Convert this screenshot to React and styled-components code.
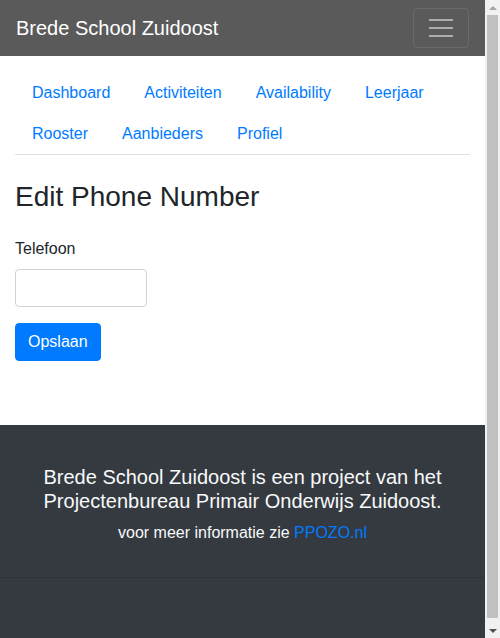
import styled, { createGlobalStyle } from 'styled-components';

const GlobalStyle = createGlobalStyle`
  html, body {
    margin: 0;
    padding: 0;
  }
  body {
    font-family: "Liberation Sans", Arial, sans-serif;
    font-size: 16px;
    line-height: 1.5;
    color: #212529;
    background-color: #fff;
  }
  * {
    box-sizing: border-box;
  }
`;

const Page = styled.div`
  width: 485px;
`;

const Navbar = styled.nav`
  display: flex;
  justify-content: space-between;
  align-items: center;
  padding: 8px 16px;
  background-color: #5a5a5a;
`;

const Brand = styled.a`
  padding: 5px 0;
  font-size: 20px;
  line-height: 30px;
  color: #fff;
  text-decoration: none;
`;

const Toggler = styled.button`
  display: flex;
  flex-direction: column;
  justify-content: center;
  align-items: center;
  gap: 6px;
  width: 56px;
  height: 40px;
  padding: 0;
  background: transparent;
  border: 1px solid rgba(255, 255, 255, 0.1);
  border-radius: 4px;
  cursor: pointer;
`;

const TogglerLine = styled.span`
  display: block;
  width: 24px;
  height: 2px;
  background-color: rgba(255, 255, 255, 0.5);
`;

const Main = styled.main`
  padding: 16px 15px 64px;
`;

const Tabs = styled.ul`
  display: flex;
  flex-wrap: wrap;
  list-style: none;
  margin: 0;
  padding: 0;
  border-bottom: 1px solid #dee2e6;
`;

const TabItem = styled.li`
  margin-bottom: -1px;
`;

const TabLink = styled.a`
  display: block;
  padding: 8px 16px;
  border: 1px solid transparent;
  color: #007bff;
  text-decoration: none;
  cursor: pointer;
  &:hover {
    text-decoration: underline;
  }
`;

const Title = styled.h3`
  margin: 25px 0 23px;
  font-size: 28px;
  font-weight: 500;
  line-height: 1.2;
`;

const FormGroup = styled.div`
  margin-bottom: 16px;
`;

const Label = styled.label`
  display: block;
  margin-bottom: 8px;
`;

const Input = styled.input`
  display: block;
  width: 132px;
  height: 38px;
  padding: 6px 12px;
  font-family: inherit;
  font-size: 16px;
  color: #495057;
  border: 1px solid #ced4da;
  border-radius: 4px;
`;

const Button = styled.button`
  padding: 6px 12px;
  font-family: inherit;
  font-size: 16px;
  line-height: 24px;
  color: #fff;
  background-color: #007bff;
  border: 1px solid #007bff;
  border-radius: 4px;
  cursor: pointer;
`;

const Footer = styled.footer`
  background-color: #343a40;
  color: #f8f9fa;
  text-align: center;
`;

const FooterTop = styled.div`
  padding: 40px 15px 32px;
`;

const FooterLead = styled.h5`
  margin: 0 0 8px;
  font-size: 20px;
  font-weight: 400;
  line-height: 1.2;
`;

const FooterText = styled.p`
  margin: 0;
`;

const FooterLink = styled.a`
  color: #007bff;
  text-decoration: none;
`;

const FooterBottom = styled.div`
  height: 66px;
  border-top: 1px solid rgba(0, 0, 0, 0.12);
`;

// window scrollbar as it shows in the screenshot
const Scrollbar = styled.div`
  position: fixed;
  top: 0;
  right: 0;
  width: 15px;
  height: 100vh;
  display: flex;
  flex-direction: column;
  background-color: #f1f1f1;
`;

const ScrollArrow = styled.div`
  height: 15px;
  display: flex;
  justify-content: center;
  align-items: center;
  &::after {
    content: '';
    width: 0;
    height: 0;
    border-left: 4px solid transparent;
    border-right: 4px solid transparent;
    ${({ down }) => (down
      ? 'border-top: 4px solid #505050;'
      : 'border-bottom: 4px solid #a3a3a3;')}
  }
`;

const ScrollThumb = styled.div`
  flex: 1;
  margin: 0 2px 5px;
  background-color: #c1c1c1;
`;

const tabs = ['Dashboard', 'Activiteiten', 'Availability', 'Leerjaar', 'Rooster', 'Aanbieders', 'Profiel'];

const App = () => {
  return (
    <>
      <GlobalStyle />
      <Page>
        <Navbar>
          <Brand href="#">Brede School Zuidoost</Brand>
          <Toggler aria-label="Toggle navigation">
            <TogglerLine />
            <TogglerLine />
            <TogglerLine />
          </Toggler>
        </Navbar>
        <Main>
          <Tabs>
            {tabs.map((tab) => (
              <TabItem key={tab}>
                <TabLink>{tab}</TabLink>
              </TabItem>
            ))}
          </Tabs>
          <Title>Edit Phone Number</Title>
          <form onSubmit={(e) => e.preventDefault()}>
            <FormGroup>
              <Label htmlFor="telefoon">Telefoon</Label>
              <Input id="telefoon" type="text" />
            </FormGroup>
            <Button type="submit">Opslaan</Button>
          </form>
        </Main>
        <Footer>
          <FooterTop>
            <FooterLead>
              Brede School Zuidoost is een project van het Projectenbureau Primair Onderwijs Zuidoost.
            </FooterLead>
            <FooterText>
              voor meer informatie zie <FooterLink href="#">PPOZO.nl</FooterLink>
            </FooterText>
          </FooterTop>
          <FooterBottom />
        </Footer>
      </Page>
      <Scrollbar aria-hidden="true">
        <ScrollArrow />
        <ScrollThumb />
        <ScrollArrow down />
      </Scrollbar>
    </>
  );
};

export default App;
